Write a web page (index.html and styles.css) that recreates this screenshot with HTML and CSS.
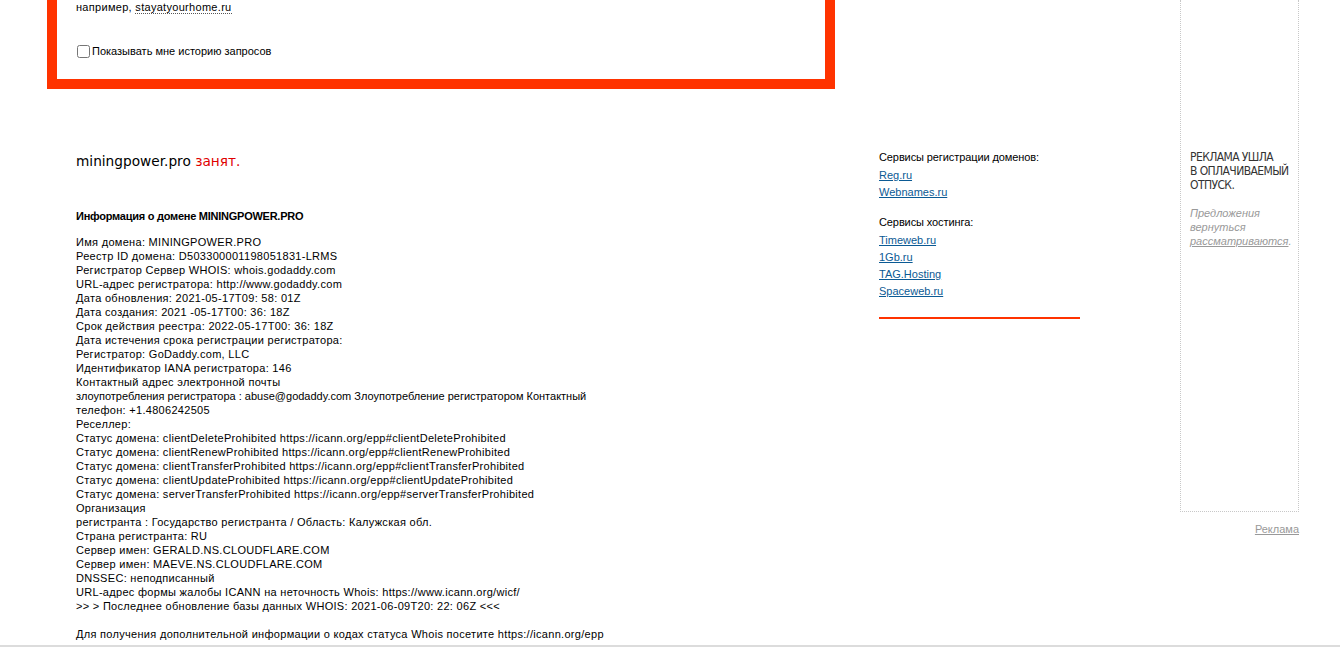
FILE: index.html
```html
<!DOCTYPE html>
<html lang="ru">
<head>
<meta charset="utf-8">
<title>miningpower.pro — Whois</title>
<link rel="stylesheet" href="styles.css">
</head>
<body>
<div class="page">
  <div class="main">
    <div class="search-box">
      <div class="hint">например, <span class="example">stayatyourhome.ru</span></div>
      <label class="history"><input type="checkbox" class="history-check">Показывать мне историю запросов</label>
    </div>
    <div class="content">
      <div class="whois">
        <div class="status">miningpower.pro <span class="busy">занят.</span></div>
        <h3 class="whois-title">Информация о домене MININGPOWER.PRO</h3>
        <div class="whois-text">
Имя домена: MININGPOWER.PRO<br>
Реестр ID домена: D503300001198051831-LRMS<br>
Регистратор Сервер WHOIS: whois.godaddy.com<br>
URL-адрес регистратора: http://www.godaddy.com<br>
Дата обновления: 2021-05-17T09: 58: 01Z<br>
Дата создания: 2021 -05-17T00: 36: 18Z<br>
Срок действия реестра: 2022-05-17T00: 36: 18Z<br>
Дата истечения срока регистрации регистратора:<br>
Регистратор: GoDaddy.com, LLC<br>
Идентификатор IANA регистратора: 146<br>
Контактный адрес электронной почты<br>
<span class="tight">злоупотребления регистратора : abuse@godaddy.com Злоупотребление регистратором Контактный</span><br>
телефон: +1.4806242505<br>
Реселлер:<br>
Статус домена: clientDeleteProhibited https://icann.org/epp#clientDeleteProhibited<br>
Статус домена: clientRenewProhibited https://icann.org/epp#clientRenewProhibited<br>
Статус домена: clientTransferProhibited https://icann.org/epp#clientTransferProhibited<br>
Статус домена: clientUpdateProhibited https://icann.org/epp#clientUpdateProhibited<br>
Статус домена: serverTransferProhibited https://icann.org/epp#serverTransferProhibited<br>
Организация<br>
регистранта : Государство регистранта / Область: Калужская обл.<br>
Страна регистранта: RU<br>
Сервер имен: GERALD.NS.CLOUDFLARE.COM<br>
Сервер имен: MAEVE.NS.CLOUDFLARE.COM<br>
DNSSEC: неподписанный<br>
URL-адрес формы жалобы ICANN на неточность Whois: https://www.icann.org/wicf/<br>
&gt;&gt; &gt; Последнее обновление базы данных WHOIS: 2021-06-09T20: 22: 06Z &lt;&lt;&lt;<br>
<br>
Для получения дополнительной информации о кодах статуса Whois посетите https://icann.org/epp
        </div>
      </div>
      <div class="services">
        <div class="services-title">Сервисы регистрации доменов:</div>
        <div class="services-list">
          <a class="service-link" href="#">Reg.ru</a>
          <a class="service-link" href="#">Webnames.ru</a>
        </div>
        <div class="services-title services-title-second">Сервисы хостинга:</div>
        <div class="services-list">
          <a class="service-link" href="#">Timeweb.ru</a>
          <a class="service-link" href="#">1Gb.ru</a>
          <a class="service-link" href="#">TAG.Hosting</a>
          <a class="service-link" href="#">Spaceweb.ru</a>
        </div>
        <div class="services-rule"></div>
      </div>
    </div>
  </div>
  <aside class="side">
    <div class="ad-box">
      <div class="ad-head">Реклама ушла<br>в оплачиваемый<br>отпуск.</div>
      <div class="ad-note">Предложения вернуться <a class="ad-note-link" href="#">рассматриваются</a>.</div>
    </div>
    <div class="ad-footer"><a class="ad-link" href="#">Реклама</a></div>
  </aside>
</div>
<div class="footer"></div>
</body>
</html>
```

FILE: styles.css
```css
html, body {
  margin: 0;
  padding: 0;
  background: #fff;
}

body {
  font-family: Tahoma, "Liberation Sans", Arial, sans-serif;
  font-size: 11px;
  line-height: 14px;
  color: #000;
}

.page {
  display: flex;
  padding-left: 47px;
}

.main {
  flex: 0 0 1133px;
}

/* search box */
.search-box {
  width: 788px;
  box-sizing: border-box;
  border: 10px solid #ff3300;
  border-top: none;
  padding: 0 0 21px 19px;
}

.hint {
  line-height: 14px;
  letter-spacing: 0.3px;
}

.example {
  border-bottom: 1px dotted #555;
}

.history {
  display: flex;
  align-items: center;
  margin-top: 30px;
  height: 14px;
  margin-left: 1px;
}

.history-check {
  width: 13px;
  height: 13px;
  margin: 0 2px 0 0;
}

/* content */
.content {
  display: flex;
  padding-top: 61px;
}

.whois {
  margin-left: 29px;
  flex: 0 0 803px;
}

.status {
  margin-top: 2px;
  font-family: "DejaVu Sans", sans-serif;
  font-size: 13.7px;
  line-height: 18px;
  color: #000;
}

.busy {
  color: #e00000;
}

.whois-title {
  margin: 39px 0 0;
  font-size: 11px;
  line-height: 14px;
  font-weight: bold;
  letter-spacing: -0.25px;
}

.whois-text {
  margin-top: 12px;
  line-height: 14px;
  letter-spacing: 0.3px;
}

.tight {
  letter-spacing: 0;
}

/* services */
.services {
  width: 201px;
}

.services-title {
  line-height: 14px;
  letter-spacing: -0.1px;
}

.services-title-second {
  margin-top: 13px;
}

.services-list {
  margin-top: 3px;
}

.service-link {
  display: block;
  width: max-content;
  line-height: 17.3px;
  color: #0b5a94;
  text-decoration: underline;
}

.services-rule {
  margin-top: 16px;
  height: 2px;
  background: #ff3300;
}

/* side ad */
.side {
  flex: 0 0 119px;
  min-width: 0;
  width: 119px;
}

.ad-box {
  box-sizing: border-box;
  height: 512px;
  border: 1px dotted #c8c8c8;
  border-top: none;
  padding: 150px 4px 0 9px;
  overflow: hidden;
}

.ad-head {
  font-family: "DejaVu Sans Condensed", "Liberation Sans Narrow", "Roboto Condensed", sans-serif;
  font-size: 12px;
  line-height: 14px;
  letter-spacing: -0.6px;
  text-transform: uppercase;
  white-space: nowrap;
  color: #333;
}

.ad-note {
  margin-top: 14px;
  font-family: "Liberation Sans", Arial, sans-serif;
  font-style: italic;
  font-size: 11px;
  line-height: 14px;
  color: #999;
}

.ad-note-link {
  color: #999;
  text-decoration: underline;
}

.ad-footer {
  margin-top: 10px;
  text-align: right;
}

.ad-link {
  color: #999;
  text-decoration: underline;
}

.footer {
  margin-top: 4px;
  border-top: 2px solid #dcdcdc;
  height: 20px;
}
```
